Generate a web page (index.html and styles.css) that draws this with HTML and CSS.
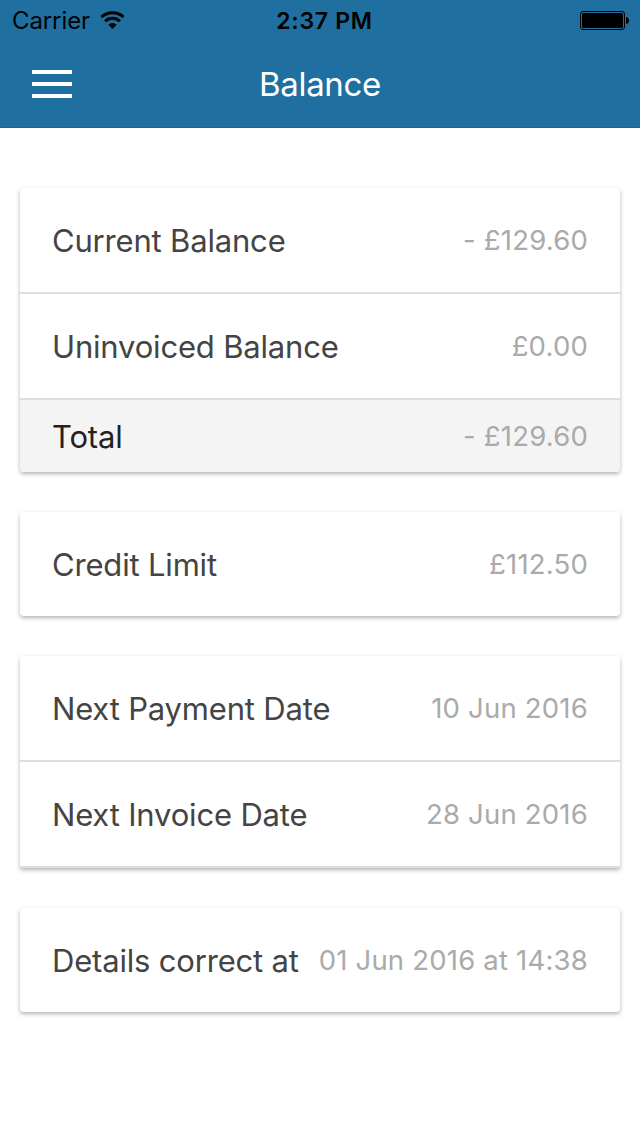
FILE: index.html
```
<!DOCTYPE html>
<html lang="en">
<head>
    <meta charset="UTF-8">
    <title>Balance</title>
    <link rel="stylesheet" href="styles.css">
</head>
<body>

    <header>
        <div class="status-bar">
            <div class="carrier">
                <span>Carrier</span>
                <svg class="wifi" width="26" height="18" viewBox="0 0 26 18">
                    <path d="M1.4 6a16.6 16.6 0 0 1 22.2 0" fill="none" stroke="#000" stroke-width="3"/>
                    <path d="M5.1 10.3a10.6 10.6 0 0 1 14.8 0" fill="none" stroke="#000" stroke-width="3"/>
                    <path d="M8.3 13.8a6 6 0 0 1 8.4 0L12.5 18z"/>
                </svg>
            </div>
            <span class="time">2:37 PM</span>
            <svg class="battery" width="50" height="20" viewBox="0 0 50 20">
                <rect x=".5" y=".5" width="44" height="18" rx="2.5" fill="none" stroke="#000"/>
                <rect x="2" y="2" width="41" height="15" rx="1.5"/>
                <path d="M46 6q3 .5 3 3.5t-3 3.5z"/>
            </svg>
        </div>
        <div class="nav-bar">
            <button class="menu" aria-label="Menu"><span></span><span></span><span></span></button>
            <h1>Balance</h1>
        </div>
    </header>

    <main>
        <section class="card">
            <div class="item"><span class="label">Current Balance</span><span class="note">- £129.60</span></div>
            <div class="item"><span class="label">Uninvoiced Balance</span><span class="note">£0.00</span></div>
            <div class="item total"><span class="label">Total</span><span class="note">- £129.60</span></div>
        </section>

        <section class="card">
            <div class="item"><span class="label">Credit Limit</span><span class="note">£112.50</span></div>
        </section>

        <section class="card dates">
            <div class="item"><span class="label">Next Payment Date</span><span class="note">10 Jun 2016</span></div>
            <div class="item"><span class="label">Next Invoice Date</span><span class="note">28 Jun 2016</span></div>
        </section>

        <section class="card">
            <div class="item"><span class="label">Details correct at</span><span class="note">01 Jun 2016 at 14:38</span></div>
        </section>
    </main>

</body>
</html>
```
FILE: styles.css
```
* {
    box-sizing: border-box;
}

body {
    margin: 0;
    font-family: Inter, sans-serif;
    background-color: #fff;
}

header {
    height: 128px;
    background-color: #1f70a0;
    border-bottom: 1px solid #1b658f;
}

.status-bar {
    display: grid;
    grid-template-columns: 1fr auto 1fr;
    align-items: center;
    height: 40px;
    padding: 0 10px 0 12px;
    font-size: 24px;
}

.carrier {
    display: flex;
    align-items: center;
    gap: 10px;
    letter-spacing: -0.1px;
}

.time {
    padding: 2px 0 0 7px;
    font-size: 23px;
    font-weight: 600;
    letter-spacing: 0.7px;
}

.battery {
    justify-self: end;
    margin-top: 2px;
}

.nav-bar {
    display: grid;
    grid-template-columns: 40px 1fr 40px;
    align-items: center;
    height: 88px;
    padding: 0 32px;
}

.menu {
    display: flex;
    flex-direction: column;
    gap: 8px;
    padding: 0;
    border: none;
    background: none;
}

.menu span {
    width: 40px;
    height: 4px;
    background-color: #fff;
}

h1 {
    margin: 0;
    text-align: center;
    font-size: 33px;
    font-weight: 400;
    letter-spacing: -0.3px;
    color: #fff;
}

main {
    display: flex;
    flex-direction: column;
    gap: 40px;
    padding: 60px 20px;
}

.card {
    border-radius: 4px;
    overflow: hidden;
    background-color: #fff;
    box-shadow: 0 2px 4px rgba(0, 0, 0, 0.3);
}

.item {
    display: flex;
    align-items: center;
    justify-content: space-between;
    height: 104px;
    padding: 1px 32px 0;
    white-space: nowrap;
}

.item + .item {
    height: 106px;
    border-top: 2px solid #dedede;
}

.item.total {
    height: 74px;
    background-color: #f4f4f4;
}

.label {
    font-size: 31px;
    letter-spacing: -0.18px;
    color: #444;
}

.total .label {
    color: #222;
}

.note {
    padding-bottom: 2px;
    font-size: 27.5px;
    letter-spacing: 0.2px;
    color: #aaa;
}

.dates {
    border-bottom: 2px solid #dedede;
    border-radius: 4px 4px 0 0;
}
```
